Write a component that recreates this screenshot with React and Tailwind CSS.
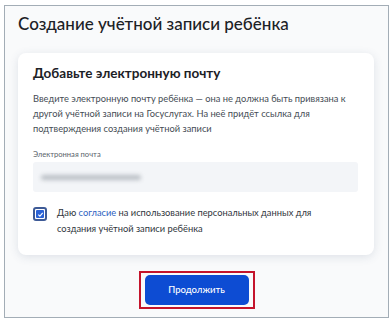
export default function App() {
  return (
    <div
      className="w-[392px] h-[320px] bg-white pt-[5px] pl-[4px] overflow-hidden"
      style={{ fontFamily: "Lato, 'Noto Sans', sans-serif" }}
    >
      <div className="w-[385px] h-[313px] border border-[#a3adb6] bg-[#f9fafb] px-[13px] pt-[7px] flex flex-col">
        <h1 className="text-[17px] leading-[22px] text-[#1c2126] font-medium">
          Создание учётной записи ребёнка
        </h1>

        <div className="mt-[18px] w-[356px] h-[202px] bg-white rounded-[8px] shadow-[0_2px_10px_rgba(60,80,110,0.14)] px-[15px] pt-[11px]">
          <h2 className="text-[13.5px] leading-[18px] font-bold text-[#1c2126]">
            Добавьте электронную почту
          </h2>
          <p className="mt-[9px] text-[9.3px] leading-[15px] text-[#454c54]">
            Введите электронную почту ребёнка — она не должна быть привязана к
            другой учётной записи на Госуслугах. На неё придёт ссылка для
            подтверждения создания учётной записи
          </p>

          <div className="mt-[13px] text-[7.6px] leading-[10px] text-[#5b636b]">
            Электронная почта
          </div>
          <div className="mt-[3px] h-[30px] w-[325px] bg-[#f3f5f8] rounded-[3px] flex items-center pl-[8px]">
            <div className="h-[5px] w-[100px] rounded-full bg-[#b9bec4] blur-[2px]"></div>
          </div>

          <div className="mt-[13px] flex items-start gap-[10px]">
            <div className="mt-[2px] w-[14px] h-[14px] shrink-0 rounded-[3px] border-[2px] border-[#3d5a96] flex items-center justify-center">
              <div className="w-[8px] h-[8px] bg-[#2b63d6] rounded-[1px] flex items-center justify-center">
                <svg width="7" height="7" viewBox="0 0 8 8">
                  <path d="M1.5 4.2 L3.3 5.8 L6.5 2.2" fill="none" stroke="white" strokeWidth="1.3" />
                </svg>
              </div>
            </div>
            <p className="text-[9.3px] leading-[16px] text-[#30363c]">
              Даю <span className="text-[#2d5fbf]">согласие</span> на
              использование персональных данных для
              <br />
              создания учётной записи ребёнка
            </p>
          </div>
        </div>

        <div className="mt-[16px] self-center border-[2px] border-[#c4142c] px-[4px] py-[2px]">
          <button className="w-[104px] h-[30px] rounded-[5px] bg-[#0d4cd3] text-white text-[9.5px] font-medium">
            Продолжить
          </button>
        </div>
      </div>
    </div>
  );
}
